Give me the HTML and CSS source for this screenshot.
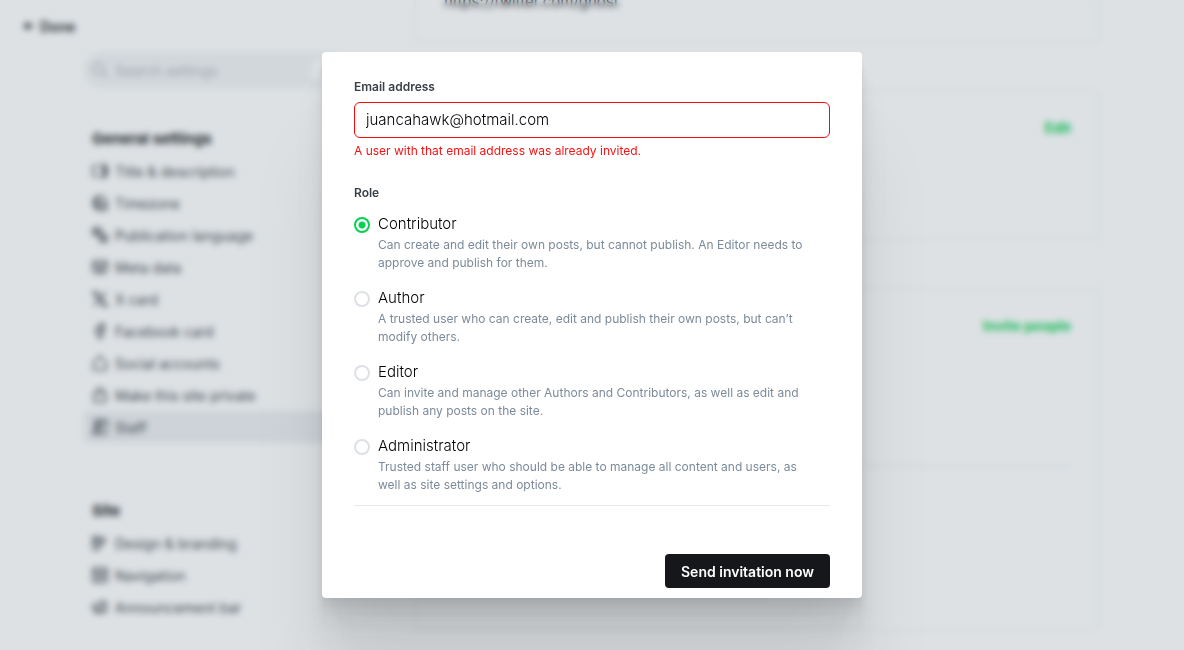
FILE: index.html
```html
<!DOCTYPE html>
<html lang="en">
<head>
<meta charset="utf-8">
<title>Invite a new staff user</title>
<link rel="stylesheet" href="styles.css">
</head>
<body>
<div class="page">
  <aside class="sidebar">
    <button class="done" type="button">
      <svg class="done-icon" viewBox="0 0 10 10"><path d="M9.500 5H1.500M4.500 1.500 1 5l3.500 3.500"/></svg>
      Done
    </button>
    <div class="sidebar-body">
      <div class="search">
        <svg class="icon" viewBox="0 0 16 16"><circle cx="6.500" cy="6.500" r="5.500"/><path d="m10.500 10.500 5 5"/></svg>
        <input class="search-input" type="text" placeholder="Search settings" aria-label="Search settings">
        <kbd class="key">/</kbd>
      </div>
      <nav class="group">
        <h2 class="group-title">General settings</h2>
        <a class="item" href="#title"><svg class="icon" viewBox="0 0 16 16"><path d="M7 3H2.500Q1 3 1 4.500v7Q1 13 2.500 13H7M9 1.500h4M9 14.500h4M11 1.500v13M13 3.500h2v9h-2z"/></svg>Title &amp; description</a>
        <a class="item" href="#timezone"><svg class="icon" viewBox="0 0 16 16"><path d="M8 15A7 7 0 1 1 15 7M1 6h8M6 2Q3 8 6 14M2 11h4"/><rect x="8" y="8" width="7" height="7" rx="2"/><path d="M11.500 9.500v2h2"/></svg>Timezone</a>
        <a class="item" href="#language"><svg class="icon" viewBox="0 0 16 16"><rect x="1" y="1" width="8" height="7" rx="1"/><path d="M3 3.500h4M5 2.500v1Q5 6 3 6.500M4 4.500l3 2"/><rect x="8" y="8" width="7" height="7" rx="1"/><path d="m10 13 1.500-3.500L13 13"/></svg>Publication language</a>
        <a class="item" href="#meta"><svg class="icon" viewBox="0 0 16 16"><path d="M1 4q0-2 2-2h10q2 0 2 2v6q0 4-4 4H5q-4 0-4-4zM1 6h14M4 9h8M5 11.500h6"/></svg>Meta data</a>
        <a class="item" href="#x"><svg class="icon" viewBox="0 0 16 16"><path d="M1 1h3.500L15 15h-3.500zM14 1 9 7M7 9l-5.500 6"/></svg>X card</a>
        <a class="item" href="#facebook"><svg class="icon" viewBox="0 0 16 16"><path d="M12 1H9.500Q6.500 1 6.500 4v2H4v3h2.500v6h3V9H12V6H9.500V4.500Q9.500 4 10 4h2z"/></svg>Facebook card</a>
        <a class="item" href="#social"><svg class="icon" viewBox="0 0 16 16"><path d="M5 6H3Q2 6 2 7l-.5 6q0 2 2 2h9q2 0 2-2L14 7q0-1-1-1h-2M5 4l3-3 3 3"/></svg>Social accounts</a>
        <a class="item" href="#private"><svg class="icon" viewBox="0 0 16 16"><rect x="2" y="6" width="12" height="9" rx="1"/><path d="M4.500 6V4.500a3.500 3.500 0 0 1 7 0V6M8 10v1"/></svg>Make this site private</a>
        <a class="item item-active" href="#staff"><svg class="icon" viewBox="0 0 16 16"><path d="M15 8V3q0-2-2-2H5Q3 1 3 3v3"/><circle cx="5" cy="8" r="2.500"/><path d="M1 15q0-4 4-4t4 4zM8 9l5-5M5 3.500h5M14 10v5h-3"/></svg>Staff</a>
      </nav>
      <nav class="group">
        <h2 class="group-title">Site</h2>
        <a class="item" href="#design"><svg class="icon" viewBox="0 0 16 16"><path d="M1 2h6v10q0 3-3 3t-3-3zM1 5h6M1 9h6M7 3h5v3L7 12M10 9l4-4"/></svg>Design &amp; branding</a>
        <a class="item" href="#navigation"><svg class="icon" viewBox="0 0 16 16"><rect x="1" y="1" width="14" height="14" rx="1"/><path d="M1 5h14M5 5v10M7 8h6M7 11h6"/></svg>Navigation</a>
        <a class="item" href="#announcement"><svg class="icon" viewBox="0 0 16 16"><path d="M1 6h3l6-3v10l-6-3H1zM4 10v4h2v-3M10 3h4q1 5 0 10h-4"/></svg>Announcement bar</a>
      </nav>
    </div>
  </aside>
  <main class="content">
    <section class="card card-url"><p class="url">https://twitter.com/ghost</p></section>
    <section class="card card-short"><button class="action" type="button">Edit</button></section>
    <section class="card card-tall"><button class="action" type="button">Invite people</button><hr class="card-rule"></section>
  </main>
</div>
<div class="overlay">
  <form class="modal" role="dialog" aria-label="Invite a new staff user">
    <label class="label" for="email">Email address</label>
    <input class="email" id="email" type="text" value="juancahawk@hotmail.com" aria-describedby="email-error">
    <p class="error" id="email-error">A user with that email address was already invited.</p>
    <fieldset class="roles">
      <legend class="label">Role</legend>
      <div class="role">
        <input class="radio" type="radio" name="role" id="contributor" checked>
        <div><label class="role-name" for="contributor">Contributor</label>
        <p class="role-text">Can create and edit their own posts, but cannot publish. An Editor needs to approve and publish for them.</p></div>
      </div>
      <div class="role">
        <input class="radio" type="radio" name="role" id="author">
        <div><label class="role-name" for="author">Author</label>
        <p class="role-text">A trusted user who can create, edit and publish their own posts, but can’t modify others.</p></div>
      </div>
      <div class="role">
        <input class="radio" type="radio" name="role" id="editor">
        <div><label class="role-name" for="editor">Editor</label>
        <p class="role-text">Can invite and manage other Authors and Contributors, as well as edit and publish any posts on the site.</p></div>
      </div>
      <div class="role">
        <input class="radio" type="radio" name="role" id="administrator">
        <div><label class="role-name" for="administrator">Administrator</label>
        <p class="role-text">Trusted staff user who should be able to manage all content and users, as well as site settings and options.</p></div>
      </div>
    </fieldset>
    <div class="footer"><button class="send" type="button">Send invitation now</button></div>
  </form>
</div>
</body>
</html>
```

FILE: styles.css
```css
* { box-sizing: border-box; }
body, h2, p, fieldset, hr { margin: 0; }
body {
  background: #fff;
  color: #15171a;
  font-family: Inter, "Liberation Sans", sans-serif;
  font-size: 14px;
}
button, input { font-family: inherit; }

.page {
  display: grid;
  grid-template-columns: 391px minmax(0, 1fr);
  max-width: 1184px;
  height: 100vh;
  margin: 0 auto;
  padding: 0 84px 0 24px;
  overflow: hidden;
}
.done {
  display: flex;
  align-items: center;
  gap: 6px;
  height: 52px;
  padding: 0;
  border: 0;
  background: none;
  color: #15171a;
  font-size: 14px;
  font-weight: 600;
}
.done-icon { width: 10px; height: 10px; fill: none; stroke: currentColor; stroke-width: 2; }
.sidebar-body { padding: 0 72px 0 60px; }
.search {
  display: flex;
  align-items: center;
  gap: 7px;
  height: 36px;
  padding: 0 8px;
  border-radius: 18px;
  background: #f1f3f4;
  color: #abb4be;
}
.search-input {
  flex: 1;
  min-width: 0;
  padding: 0;
  border: 0;
  background: none;
  font-size: 14px;
}
.search-input::placeholder { color: #abb4be; }
.key { padding: 2px 8px; border-radius: 4px; background: #fff; font-size: 12px; }
.icon { flex: none; width: 16px; height: 16px; fill: none; stroke: currentColor; stroke-width: 1.500; }
.group { margin-top: 36px; }
.group + .group { margin-top: 53px; }
.group-title { margin-bottom: 1px; padding: 0 8px; font-size: 15px; font-weight: 700; line-height: 30px; }
.item {
  display: flex;
  align-items: center;
  gap: 7px;
  height: 32px;
  padding: 0 8px;
  border-radius: 4px;
  color: #394047;
  text-decoration: none;
}
.item-active { background: #ebeef0; }

.content { display: flex; flex-direction: column; gap: 48px; margin-top: -100px; }
.card { flex: none; padding: 28px; border: 1px solid #ebeef0; border-radius: 6px; }
.card-url { padding-top: 91px; height: 142px; }
.url { font-size: 15px; line-height: 20px; }
.card-short { min-height: 150px; }
.card-tall { min-height: 342px; }
.action {
  display: block;
  margin-left: auto;
  padding: 0;
  border: 0;
  background: none;
  color: #06d153;
  font-size: 14px;
  font-weight: 700;
  line-height: 18px;
}
.card-rule { margin-top: 130px; border: 0; border-top: 1px solid #e3e6e9; }

.overlay {
  position: fixed;
  inset: 0;
  display: flex;
  align-items: center;
  justify-content: center;
  background: rgba(85, 105, 120, 0.2);
  backdrop-filter: blur(3px);
}
.modal {
  width: 540px;
  max-width: 100%;
  padding: 26px 32px 10px;
  border-radius: 4px;
  background: #fff;
  box-shadow:
    0 3px 2px rgba(0, 0, 0, 0.02),
    0 7px 5px rgba(0, 0, 0, 0.03),
    0 13px 10px rgba(0, 0, 0, 0.04),
    0 22px 18px rgba(0, 0, 0, 0.05),
    0 42px 33px rgba(0, 0, 0, 0.06),
    0 100px 80px rgba(0, 0, 0, 0.08);
}
.label {
  display: block;
  padding: 0;
  color: #394047;
  font-size: 12px;
  font-weight: 600;
  line-height: 18px;
}
.email {
  display: block;
  width: 100%;
  height: 36px;
  margin-top: 6px;
  padding: 0 11px 1px;
  border: 1px solid #f50b0b;
  border-radius: 6px;
  background: #fff;
  color: #000;
  font-size: 15px;
  font-weight: 300;
}
.error { margin-top: 4px; color: #f81414; font-size: 12px; line-height: 18px; }
.roles {
  margin-top: 24px;
  padding: 0 0 11px;
  border: 0;
  border-bottom: 1px solid #e6e9eb;
}
.role { display: flex; gap: 8px; margin-top: 16px; }
.label + .role { margin-top: 12px; }
.radio {
  flex: none;
  width: 16px;
  height: 16px;
  margin: 3px 0 0;
  border: 2px solid #dde1e5;
  border-radius: 50%;
  appearance: none;
}
.radio:checked {
  border-color: #06d153;
  background: radial-gradient(circle, #06d153 3px, #fff 4px);
}
.role-name { display: block; color: #000; font-size: 15px; font-weight: 300; line-height: 20px; }
.role-text { margin-top: 2px; padding-right: 12px; color: #7c8b9a; font-size: 12px; line-height: 18px; }
.footer { display: flex; justify-content: flex-end; margin-top: 48px; }
.send {
  height: 34px;
  padding: 0 16px;
  border: 0;
  border-radius: 4px;
  background: #15171a;
  color: #fff;
  font-size: 14px;
  font-weight: 600;
}
```
